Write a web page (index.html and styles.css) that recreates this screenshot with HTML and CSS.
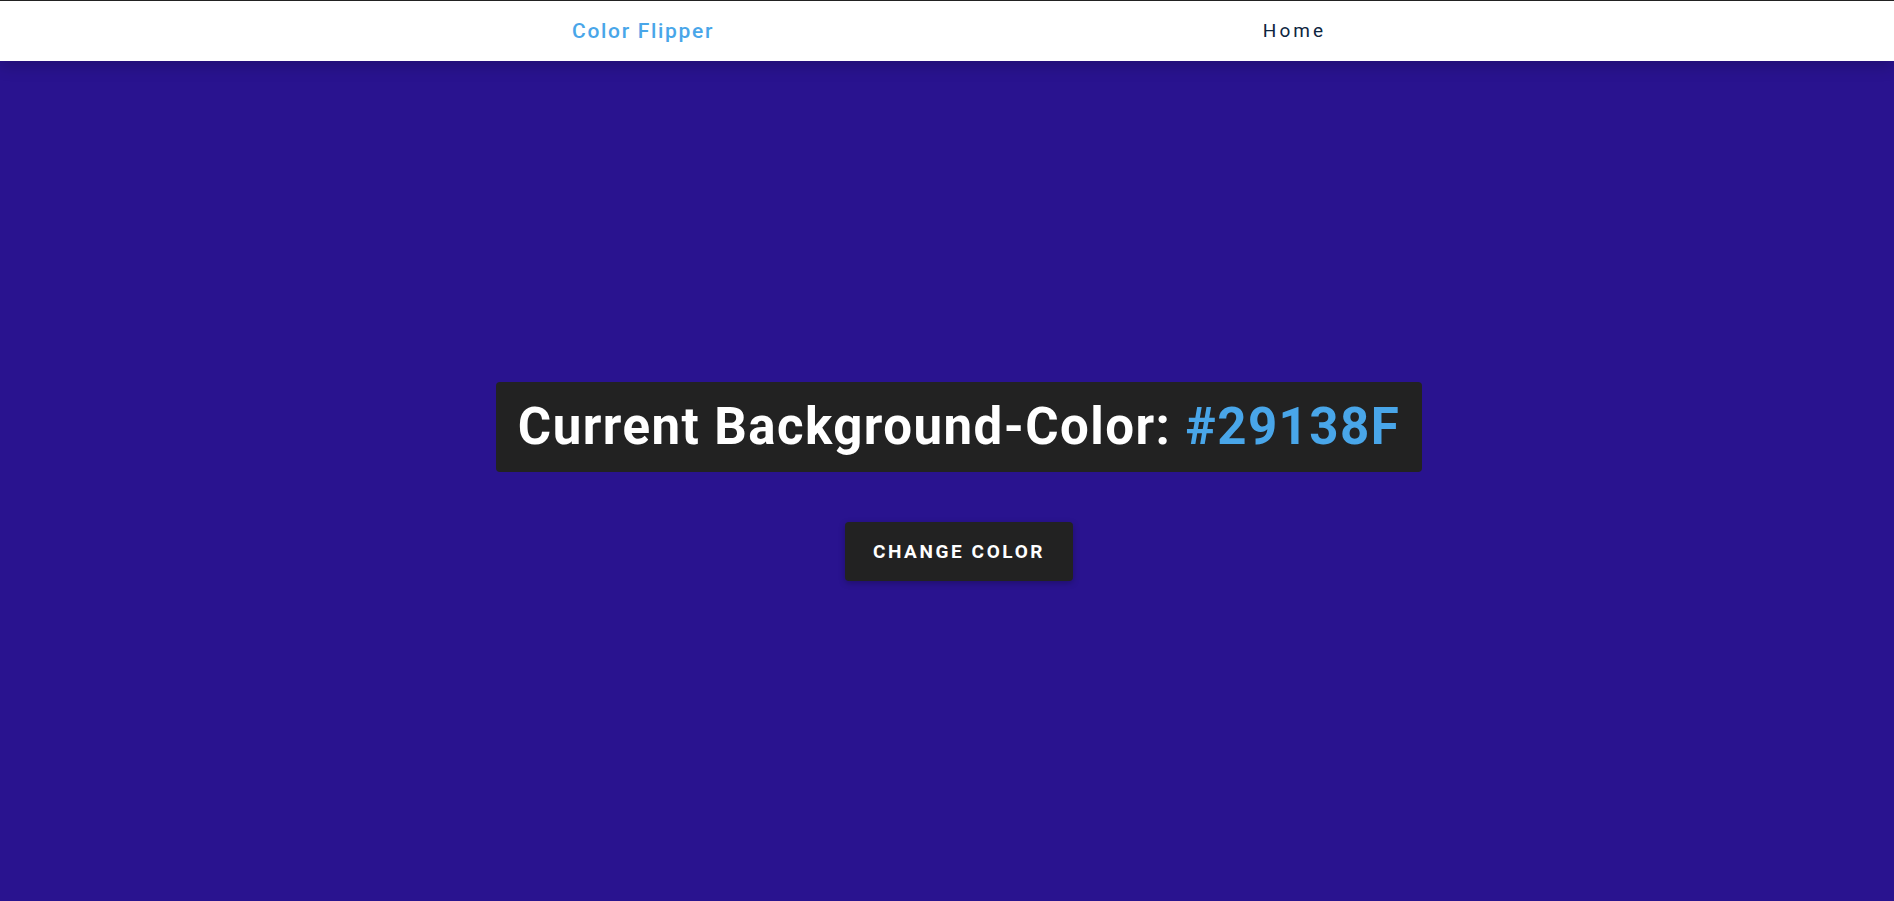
FILE: index.html
```html
<!DOCTYPE html>
<html lang="en">
<head>
<meta charset="utf-8">
<title>Color Flipper</title>
<link rel="stylesheet" href="styles.css">
</head>
<body>
  <nav class="nav">
    <div class="nav-center">
      <h4 class="brand">Color Flipper</h4>
      <ul class="nav-links">
        <li><a href="#" class="nav-link">Home</a></li>
      </ul>
    </div>
  </nav>
  <main class="main">
    <div class="container">
      <h2 class="title">Current Background-Color: <span class="color">#29138F</span></h2>
      <button class="btn" type="button">change color</button>
    </div>
  </main>
</body>
</html>
```

FILE: styles.css
```css
* {
  margin: 0;
  padding: 0;
  box-sizing: border-box;
}

html, body {
  height: 100%;
}

body {
  display: flex;
  flex-direction: column;
  font-family: Roboto, "Liberation Sans", sans-serif;
  background: #29138f;
  border-top: 1px solid #222222;
  overflow: hidden;
}

.nav {
  position: relative;
  z-index: 2;
  height: 60px;
  flex: 0 0 60px;
  background: #ffffff;
  display: flex;
  align-items: center;
  box-shadow: 0 5px 15px rgba(0, 0, 0, 0.2);
}

.nav-center {
  width: 758px;
  padding-left: 4px;
  margin: 0 auto;
  display: flex;
  justify-content: space-between;
  align-items: center;
}

.brand {
  font-size: 21px;
  font-weight: 500;
  color: #49a6e9;
  letter-spacing: 1.7px;
  line-height: 1;
}

.nav-links {
  list-style: none;
}

.nav-link {
  text-decoration: none;
  color: #0d2540;
  font-size: 19px;
  letter-spacing: 3px;
  line-height: 1;
}

.main {
  flex: 1;
  display: flex;
  align-items: center;
  justify-content: center;
  padding-left: 24px;
}

.container {
  display: flex;
  flex-direction: column;
  align-items: center;
  gap: 50px;
}

.title {
  background: #222222;
  color: #ffffff;
  font-size: 51px;
  font-weight: 700;
  letter-spacing: 1.45px;
  line-height: 90px;
  height: 90px;
  padding: 0 22px;
  border-radius: 4px;
  white-space: nowrap;
}

.color {
  color: #49a6e9;
}

.btn {
  background: #222222;
  color: #ffffff;
  border: none;
  border-radius: 4px;
  font-family: Roboto, "Liberation Sans", sans-serif;
  font-size: 19px;
  font-weight: 700;
  text-transform: uppercase;
  letter-spacing: 2.6px;
  height: 59px;
  padding: 0 28px;
  box-shadow: 0 2px 6px rgba(0, 0, 0, 0.25);
  cursor: pointer;
}
```
